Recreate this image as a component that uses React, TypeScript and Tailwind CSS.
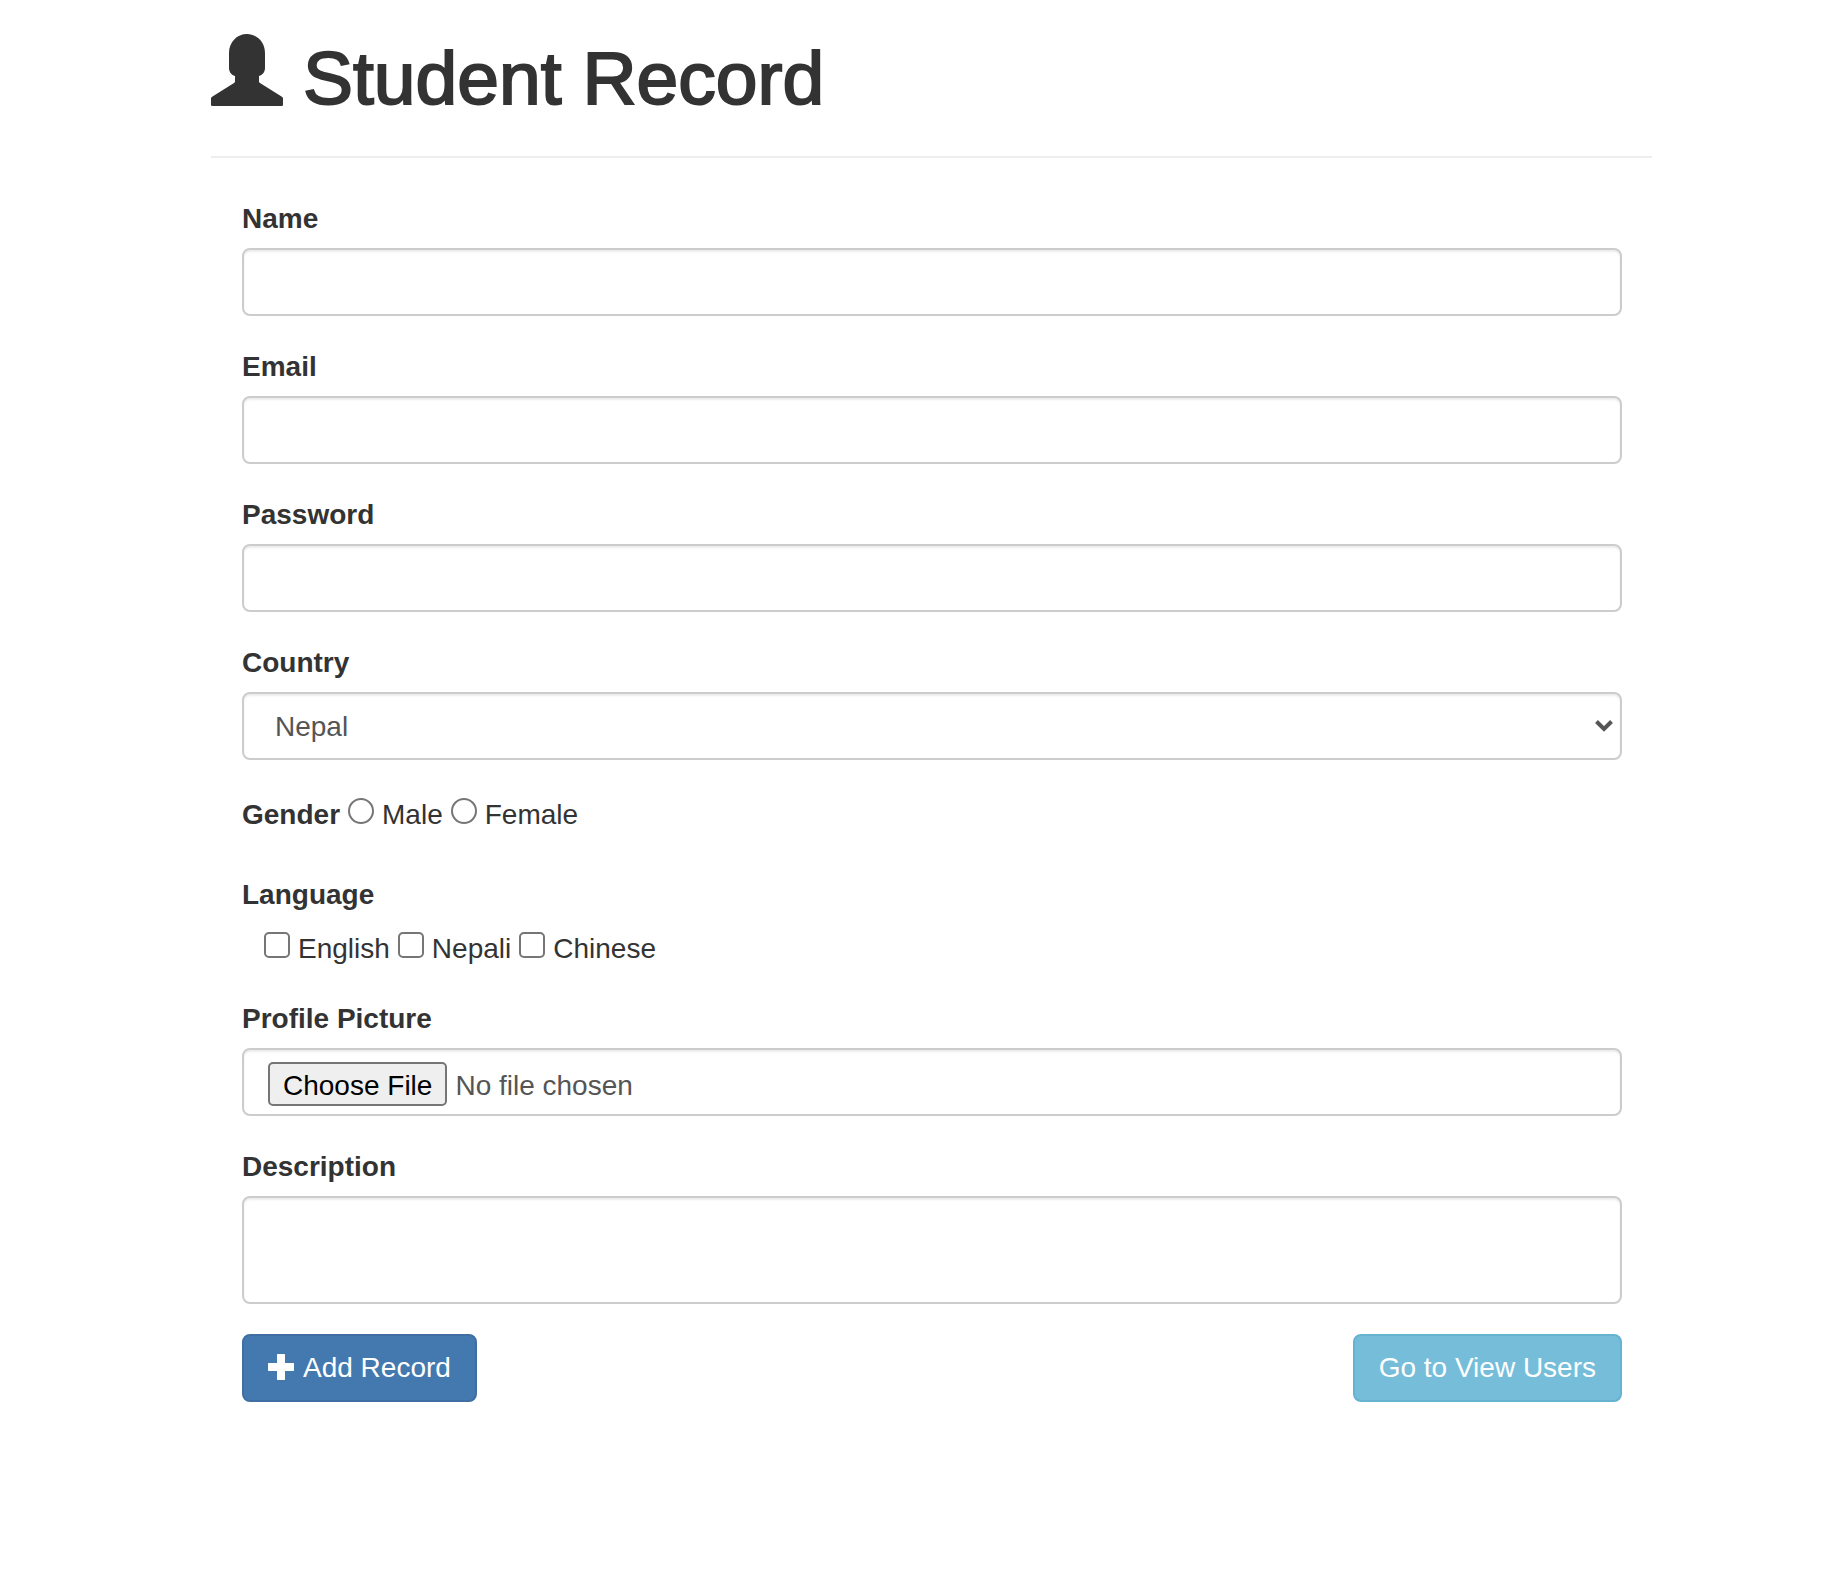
import type { ReactNode } from "react";

const control =
  "block w-full rounded-lg border-2 border-[#cccccc] bg-white text-[28px] leading-10 text-[#555555] shadow-[inset_0_2px_2px_rgba(0,0,0,0.075)] outline-none focus:border-[#66afe9]";

const tick =
  "size-[26px] shrink-0 appearance-none border-2 border-[#767676] bg-white checked:bg-[#0075ff]";

function Field({ id, label, children }: { id: string; label: string; children: ReactNode }) {
  return (
    <div className="mb-[30px]">
      <label htmlFor={id} className="mb-2 block font-bold">
        {label}
      </label>
      {children}
    </div>
  );
}

function UserIcon() {
  return (
    <svg viewBox="0 0 72 72" className="size-[72px] shrink-0" fill="currentColor" aria-hidden="true">
      <path d="M36 0C26 0 18 8 18 19V34C18 38 20.500 41 24 42V47C24 48 23.800 48.400 23 49L1.500 62.500C0.500 63.200 0 63.500 0 64.500V70.500C0 71.500 0.500 72 1.500 72H70.500C71.500 72 72 71.500 72 70.500V64.500C72 63.500 71.500 63.200 70.500 62.500L49 49C48.200 48.400 48 48 48 47V42C51.500 41 54 38 54 34V19C54 8 46 0 36 0Z" />
    </svg>
  );
}

function PlusIcon() {
  return (
    <svg viewBox="0 0 26 26" className="mb-0.5 size-[26px]" fill="currentColor" aria-hidden="true">
      <path d="M9.500 0H16.500L17 0.500V9H25.500L26 9.500V16.500L25.500 17H17V25.500L16.500 26H9.500L9 25.500V17H0.500L0 16.500V9.500L0.500 9H9V0.500Z" />
    </svg>
  );
}

export default function App() {
  return (
    <main className="min-h-screen bg-white pt-[34px] pr-[180px] pb-10 pl-[211px] font-['Liberation_Sans',Arial,sans-serif] text-[28px] leading-[42px] text-[#333333]">
      <header className="mb-10 flex items-start gap-5 border-b-2 border-[#eeeeee] pb-[38px]">
        <UserIcon />
        <h1 className="pt-1 text-[75px] leading-20 [-webkit-text-stroke:2px_#333333]">Student Record</h1>
      </header>

      <form className="pr-[30px] pl-[31px]" onSubmit={(e) => e.preventDefault()}>
        <Field id="name" label="Name">
          <input id="name" type="text" className={`${control} h-[68px] px-6`} />
        </Field>
        <Field id="email" label="Email">
          <input id="email" type="email" className={`${control} h-[68px] px-6`} />
        </Field>
        <Field id="password" label="Password">
          <input id="password" type="password" className={`${control} h-[68px] px-6`} />
        </Field>
        <Field id="country" label="Country">
          <div className="relative">
            <select id="country" defaultValue="Nepal" className={`${control} h-[68px] appearance-none pt-0.5 pr-12 pl-[31px]`}>
              <option>Nepal</option>
              <option>China</option>
              <option>India</option>
            </select>
            <svg
              viewBox="0 0 18 12"
              className="pointer-events-none absolute top-7 right-[9px] h-3 w-[18px] text-[#555555]"
              fill="none"
              stroke="currentColor"
              strokeWidth="4"
              aria-hidden="true"
            >
              <path d="M1.500 1.500L9 9L16.500 1.500" />
            </svg>
          </div>
        </Field>

        <fieldset className="mb-10 flex h-11 items-baseline gap-2 pt-1">
          <legend className="float-left font-bold">Gender</legend>
          <input id="male" type="radio" name="gender" className={`${tick} rounded-full`} />
          <label htmlFor="male">Male</label>
          <input id="female" type="radio" name="gender" className={`${tick} rounded-full`} />
          <label htmlFor="female">Female</label>
        </fieldset>

        <fieldset className="mb-[30px]">
          <legend className="mb-2 font-bold">Language</legend>
          <div className="flex h-11 items-baseline gap-2 pt-1 pl-[22px]">
            <input id="english" type="checkbox" className={`${tick} rounded-[5px]`} />
            <label htmlFor="english">English</label>
            <input id="nepali" type="checkbox" className={`${tick} rounded-[5px]`} />
            <label htmlFor="nepali">Nepali</label>
            <input id="chinese" type="checkbox" className={`${tick} rounded-[5px]`} />
            <label htmlFor="chinese">Chinese</label>
          </div>
        </fieldset>

        <Field id="picture" label="Profile Picture">
          <input
            id="picture"
            type="file"
            className={`${control} h-[68px] px-6 py-3 file:mr-2 file:h-11 file:rounded-[5px] file:border-2 file:border-solid file:border-[#767676] file:bg-[#efefef] file:px-[13px] file:pt-0.5 file:pb-0 file:text-black`}
          />
        </Field>
        <Field id="description" label="Description">
          <textarea id="description" className={`${control} h-[108px] resize-none px-6 py-3`} />
        </Field>

        <div className="flex justify-between">
          <button
            type="submit"
            className="flex h-[68px] items-center gap-[9px] rounded-lg border-2 border-[#3f6ea3] bg-[#4479b0] px-6 text-white"
          >
            <PlusIcon />
            Add Record
          </button>
          <button
            type="button"
            className="h-[68px] rounded-lg border-2 border-[#65b2d1] bg-[#75bdd9] px-6 text-white"
          >
            Go to View Users
          </button>
        </div>
      </form>
    </main>
  );
}
